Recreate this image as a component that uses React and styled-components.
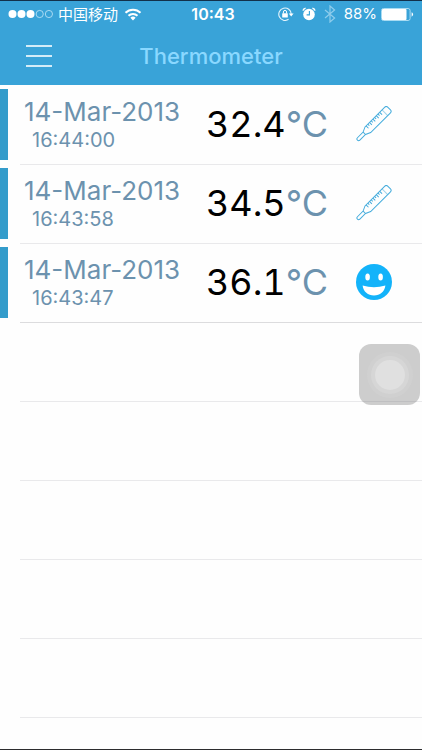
import React from "react";
import styled, { createGlobalStyle } from "styled-components";

const GlobalStyle = createGlobalStyle`
  * {
    box-sizing: border-box;
  }
  body {
    margin: 0;
    background: #fefefe;
    font-family: Inter, "Liberation Sans", "Noto Sans CJK SC", sans-serif;
  }
`;

const Page = styled.div`
  position: relative;
  min-height: 100vh;
  overflow: hidden;
  border-top: 1px solid #12304a;
  border-bottom: 1px solid #2c2c2e;
`;

const Header = styled.header`
  background: #39a3d8;
  color: #fff;
`;

const StatusBar = styled.div`
  display: grid;
  grid-template-columns: 1fr auto 1fr;
  align-items: center;
  height: 26px;
  padding: 0 8px;
  font-size: 16px;
  line-height: 20px;
`;

const StatusGroup = styled.div`
  display: flex;
  align-items: center;
  justify-content: ${(props) => (props.$end ? "flex-end" : "flex-start")};
  gap: ${(props) => (props.$end ? "8px" : "4px")};
  white-space: nowrap;
`;

const Carrier = styled.span`
  padding-right: 2px;
  font-family: "Noto Sans CJK SC", sans-serif;
  font-size: 15px;
`;

const Clock = styled.time`
  padding-left: 4px;
  font-weight: 600;
`;

const Percent = styled.span`
  font-size: 15px;
`;

const NavBar = styled.div`
  display: grid;
  grid-template-columns: 60px 1fr 60px;
  align-items: center;
  height: 58px;
`;

const MenuButton = styled.button`
  display: flex;
  flex-direction: column;
  gap: 8px;
  width: 60px;
  padding: 8px;
  padding-left: 26px;
  border: 0;
  background: none;
  cursor: pointer;
`;

const MenuLine = styled.span`
  width: 26px;
  height: 2px;
  background: #d3ecf8;
`;

const Title = styled.h1`
  margin: 0;
  color: #8ad8ff;
  font-size: 22px;
  font-weight: 500;
  line-height: 28px;
  text-align: center;
`;

const List = styled.ul`
  margin: 0;
  padding: 1px 0 0;
  list-style: none;
`;

const Row = styled.li`
  display: flex;
  height: 79px;
  padding-top: 3px;
`;

const Bar = styled.span`
  width: 8px;
  height: 71px;
  margin-right: 12px;
  background: ${(props) => (props.$filled ? "#339ccb" : "transparent")};
`;

const Content = styled.div`
  flex: 1;
  display: flex;
  align-items: center;
  padding: 0 30px 6px 4px;
  border-bottom: 1px solid ${(props) => (props.$strong ? "#dcdcde" : "#e9e9eb")};
`;

const When = styled.div`
  flex: 1;
  padding-top: 4px;
  color: #6c92ae;
  white-space: nowrap;
`;

const DateText = styled.div`
  font-size: 26px;
  line-height: 28px;
`;

const TimeText = styled.div`
  padding-left: 8px;
  font-size: 20px;
  line-height: 28px;
`;

const Reading = styled.div`
  margin-right: 28px;
  color: #000;
  font-size: 36px;
  font-variant-numeric: tabular-nums;
  line-height: 46px;
  white-space: nowrap;
`;

const Unit = styled.span`
  color: #6c92ae;
`;

const AssistiveButton = styled.button`
  position: absolute;
  top: 343px;
  right: 2px;
  display: grid;
  place-items: center;
  width: 61px;
  height: 61px;
  padding: 0;
  border: 0;
  border-radius: 12px;
  background: rgba(110, 110, 112, 0.34);
`;

const AssistiveDot = styled.span`
  width: 30px;
  height: 30px;
  border-radius: 50%;
  background: #e0e0e0;
  box-shadow: 0 0 0 4px #d6d6d6, 0 0 0 8px #d0d0d0;
`;

function Signal() {
  return (
    <svg width="46" height="10" viewBox="0 0 46 10">
      <g fill="#fff">
        <circle cx="4.5" cy="5" r="4" />
        <circle cx="13.5" cy="5" r="4" />
        <circle cx="22.5" cy="5" r="4" />
      </g>
      <g fill="none" stroke="#b5e0f5" strokeWidth="0.9">
        <circle cx="31.7" cy="5" r="3.6" />
        <circle cx="40.9" cy="5" r="3.6" />
      </g>
    </svg>
  );
}

function Wifi() {
  return (
    <svg width="18" height="13" viewBox="0 0 18 13">
      <g fill="none" stroke="#fff" strokeWidth="2">
        <path d="M1.5 4.8a10.6 10.6 0 0 1 15 0" />
        <path d="M4.5 7.8a6.4 6.4 0 0 1 9 0" />
      </g>
      <path d="M6.4 9.7a3.7 3.7 0 0 1 5.2 0L9 12.4z" fill="#fff" />
    </svg>
  );
}

function RotationLock() {
  return (
    <svg width="16" height="14" viewBox="0 0 16 14">
      <path d="M10.6 12.3A6.2 6.2 0 1 1 13.2 7" fill="none" stroke="#e4f4fc" strokeWidth="1.1" />
      <path d="M10.8 6.6h4.8l-2.4 3z" fill="#fff" />
      <rect x="4.2" y="6.2" width="5.6" height="4.2" rx="0.5" fill="#fff" />
      <path d="M5.4 6.4V5a1.6 1.6 0 0 1 3.2 0v1.4" fill="none" stroke="#fff" strokeWidth="1" />
    </svg>
  );
}

function Alarm() {
  return (
    <svg width="14" height="14" viewBox="0 0 14 14">
      <circle cx="7" cy="7.5" r="5.8" fill="#fff" />
      <path d="M1 3.6A3 3 0 0 1 3.6 1.2M10.4 1.2A3 3 0 0 1 13 3.6" fill="none" stroke="#fff" strokeWidth="1.5" />
      <path d="M7.4 4v3.9H4.6" fill="none" stroke="#39a3d8" strokeWidth="1.1" />
    </svg>
  );
}

function Bluetooth() {
  return (
    <svg width="12" height="18" viewBox="0 0 12 18">
      <path d="M1 5l9.6 8L6 17V1l4.6 4L1 13" fill="none" stroke="#8fcdec" strokeWidth="1.2" />
    </svg>
  );
}

function Battery() {
  return (
    <svg width="33" height="13" viewBox="0 0 33 13">
      <rect x="0.5" y="0.5" width="28.6" height="12" rx="2" fill="none" stroke="#a9dbf2" />
      <rect x="1" y="1" width="24.5" height="11" rx="1" fill="#fff" />
      <path d="M30.6 4.3a2.4 2.4 0 0 1 0 4.4z" fill="#fff" />
    </svg>
  );
}

function ThermometerIcon() {
  return (
    <svg width="36" height="36" viewBox="0 0 36 36" role="img" aria-label="Low">
      <g transform="translate(1.6 34) rotate(-45)" fill="none" stroke="#45acdc" strokeWidth="1">
        <path d="M1.5 -1.7H9.5L14.5 -4H42.5a2 2 0 0 1 2 2V2a2 2 0 0 1-2 2H14.5L9.5 1.7H1.5a1.7 1.7 0 0 1 0-3.4z" />
        <path d="M9.5 -1.7v3.4" />
        <path d="M16 -4v3.4M18.4 -4v2.2M20.8 -4v3.4M23.2 -4v2.2M25.6 -4v3.4M28 -4v2.2M30.4 -4v3.4M32.8 -4v2.2M35.2 -4v3.4" />
        <path d="M38.6 -4v8" strokeOpacity="0.5" />
      </g>
    </svg>
  );
}

function SmileIcon() {
  return (
    <svg width="36" height="36" viewBox="0 0 36 36" role="img" aria-label="Normal">
      <circle cx="18" cy="18" r="18" fill="#13b3fa" />
      <ellipse cx="11.6" cy="13" rx="2.3" ry="3.6" fill="#fff" />
      <ellipse cx="24.6" cy="13" rx="2.3" ry="3.6" fill="#fff" />
      <path d="M6.6 21.6q11.4 3.2 22.8 0C28.6 28 24 31.4 18 31.4S7.4 28 6.6 21.6z" fill="#fff" />
    </svg>
  );
}

const readings = [
  { date: "14-Mar-2013", time: "16:44:00", value: "32.4", normal: false },
  { date: "14-Mar-2013", time: "16:43:58", value: "34.5", normal: false },
  { date: "14-Mar-2013", time: "16:43:47", value: "36.1", normal: true },
];

const emptyRows = [1, 2, 3, 4, 5];

export default function App() {
  return (
    <Page>
      <GlobalStyle />
      <Header>
        <StatusBar>
          <StatusGroup>
            <Signal />
            <Carrier>中国移动</Carrier>
            <Wifi />
          </StatusGroup>
          <Clock>10:43</Clock>
          <StatusGroup $end>
            <RotationLock />
            <Alarm />
            <Bluetooth />
            <StatusGroup>
              <Percent>88%</Percent>
              <Battery />
            </StatusGroup>
          </StatusGroup>
        </StatusBar>
        <NavBar>
          <MenuButton aria-label="Menu">
            <MenuLine />
            <MenuLine />
            <MenuLine />
          </MenuButton>
          <Title>Thermometer</Title>
        </NavBar>
      </Header>
      <List>
        {readings.map((item, index) => (
          <Row key={item.time}>
            <Bar $filled />
            <Content $strong={index === readings.length - 1}>
              <When>
                <DateText>{item.date}</DateText>
                <TimeText>{item.time}</TimeText>
              </When>
              <Reading>
                {item.value}
                <Unit>°C</Unit>
              </Reading>
              {item.normal ? <SmileIcon /> : <ThermometerIcon />}
            </Content>
          </Row>
        ))}
        {emptyRows.map((row) => (
          <Row key={row} aria-hidden="true">
            <Bar />
            <Content />
          </Row>
        ))}
      </List>
      <AssistiveButton aria-label="AssistiveTouch">
        <AssistiveDot />
      </AssistiveButton>
    </Page>
  );
}
